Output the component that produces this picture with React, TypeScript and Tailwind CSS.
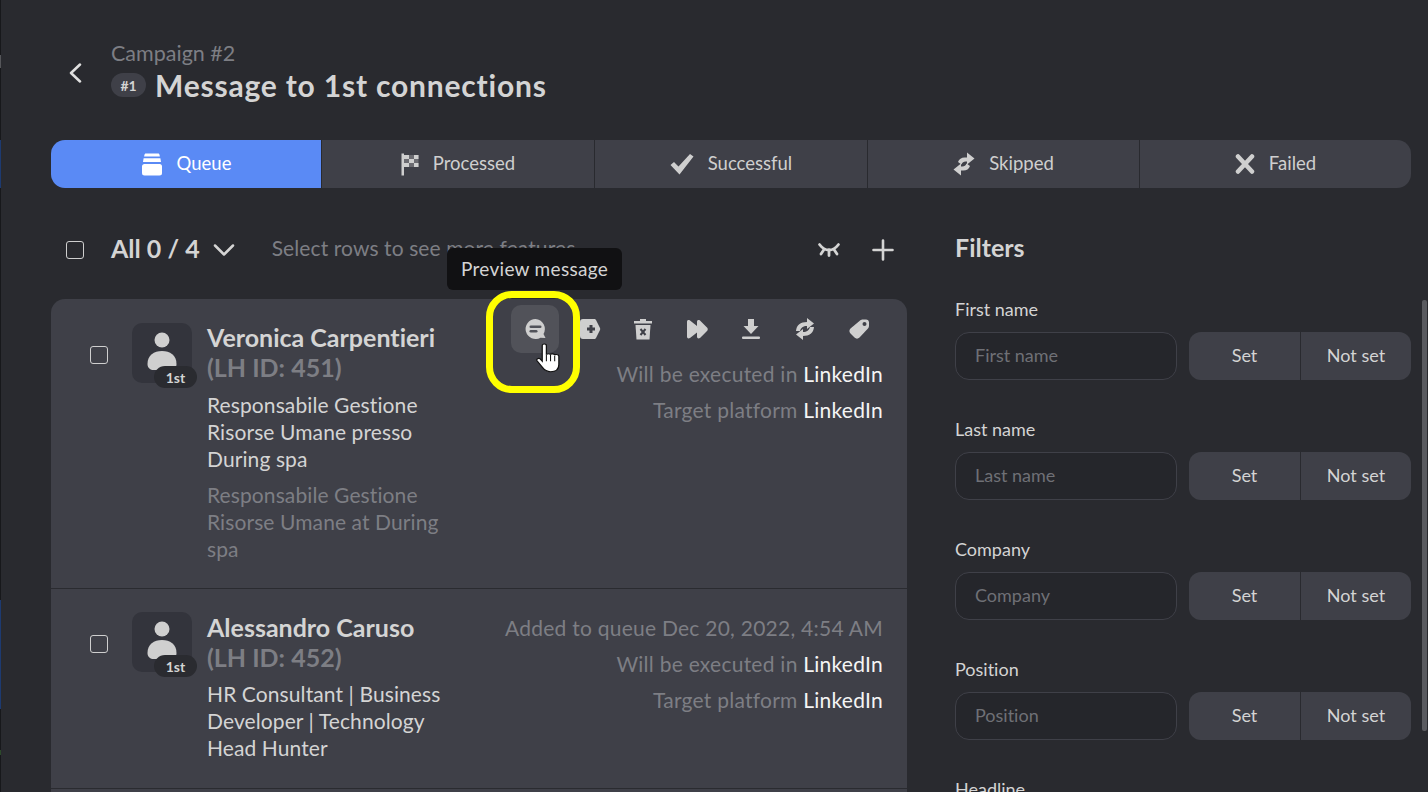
import React from "react";

const font = "font-['Lato','Liberation_Sans',sans-serif] [font-variant-ligatures:none]";

function QueueIcon() {
  return (
    <svg width="22" height="23" viewBox="0 0 22 23" fill="#fff">
      <path d="M3.500 1.800c.2-.8.6-1.300 1.400-1.300h12.200c.8 0 1.200.5 1.400 1.300l.4 1.700H3.100z" />
      <path d="M2.600 5.300h16.800l.6 3.700H2z" />
      <rect x="1" y="11" width="20" height="11.500" rx="2.500" />
    </svg>
  );
}
function FlagIcon() {
  return (
    <svg width="18" height="23" viewBox="0 0 18 23" fill="#cfcfcf">
      <rect x="0.500" y="0.500" width="2.500" height="22" />
      <path d="M3 2h14.500v12H3z" fillOpacity="0.3" />
      <path d="M3 2h5v4H3zM13 2h4.500v4H13zM8 6h5v4H8zM3 10h5v4H3zM13 10h4.500v4H13z" />
    </svg>
  );
}
function CheckIcon() {
  return (
    <svg width="24" height="22" viewBox="0 0 24 22" fill="#cfcfcf">
      <path d="M0.500 12l3.500-3 4.500 4.500L20 1l3.500 2.500L9.500 21.500z" />
    </svg>
  );
}
function SkipIcon() {
  return (
    <svg width="22" height="24" viewBox="0 0 22 24" fill="#cfcfcf">
      <path d="M14 0.500l7.500 6-7.500 6V9.500h-1.500c-2 0-3 .8-4 3L5 10c1-3 3.500-4.500 6.500-4.500H14z" />
      <path d="M8 23.500l-7.500-6 7.500-6v3h1.500c2 0 3-.8 4-3L17 14c-1 3-3.500 4.500-6.500 4.500H8z" />
    </svg>
  );
}
function XIcon() {
  return (
    <svg width="20" height="20" viewBox="0 0 20 20" stroke="#cfcfcf" strokeWidth="4.500" strokeLinecap="round" fill="none">
      <path d="M3 2.500l14 15M17 2.500l-14 15" />
    </svg>
  );
}
function Lashes() {
  return (
    <svg width="24" height="16" viewBox="0 0 24 16" stroke="#d4d4d4" strokeWidth="2.800" strokeLinecap="round" fill="none">
      <path d="M2.500 2.500C5.500 6.500 8 8 12 8s6.500-1.500 9.500-5.500" />
      <path d="M12 8v5.500M7 7.500l-3 4.500M17 7.500l3 4.500" />
    </svg>
  );
}
function Plus() {
  return (
    <svg width="22" height="22" viewBox="0 0 22 22" stroke="#d4d4d4" strokeWidth="2.600" strokeLinecap="round">
      <path d="M11 1.500v19M1.500 11h19" />
    </svg>
  );
}
function Person() {
  return (
    <svg width="30" height="44" viewBox="0 0 30 44" fill="#cfcfcf">
      <circle cx="15" cy="8" r="7.500" />
      <path d="M0.500 32c0-9 6.500-13 14.500-13s14.500 4 14.500 13c0 4-3 6-6 6h-17c-3 0-6-2-6-6z" />
    </svg>
  );
}
function Badge() {
  return (
    <div className="absolute left-[22px] top-[43px] flex h-[22px] w-[43px] items-center justify-center rounded-[11px] bg-[#2a2b30] text-[14px] font-bold text-[#d4d4d4]">
      1st
    </div>
  );
}
function Avatar() {
  return (
    <div className="relative flex h-[60px] w-[60px] shrink-0 justify-center rounded-[10px] bg-[#33343c] pt-[9px]">
      <Person />
      <Badge />
    </div>
  );
}
function Box() {
  return <div className="h-[18px] w-[18px] shrink-0 rounded-[3px] border border-[#cfcfcf]" />;
}
function Platform({ label }: { label: string }) {
  return (
    <div className="text-[21px] leading-[36px] tracking-[0.25px] text-[#7d7e84]">
      {label} <span className="text-[#f5f5f5]">LinkedIn</span>
    </div>
  );
}

const rowIcons = [
  <svg key="a" width="24" height="22" viewBox="0 0 24 22" fill="#cfcfcf"><path d="M3 4c0-2 1-3 3-3h11c1 0 1.600.4 2 1l4 8c.3.6.3 1.400 0 2l-4 8c-.4.6-1 1-2 1H6c-2 0-3-1-3-3z" /><path d="M10 11h8M14 7v8" stroke="#3f4048" strokeWidth="3" /></svg>,
  <svg key="b" width="20" height="22" viewBox="0 0 20 22" fill="#cfcfcf"><path d="M7 1h6v2h6v2.500H1V3h6z" /><path d="M2.500 7h15l-1 14.500H3.500z" /><path d="M7.500 11l5 6M12.500 11l-5 6" stroke="#3f4048" strokeWidth="2" /></svg>,
  <svg key="c" width="22" height="22" viewBox="0 0 22 22" fill="#cfcfcf"><path d="M1 4c0-2 1.500-2.500 3-1.500L11 8V4c0-2 1.500-2.500 3-1.500l7 7c1 1 1 2.500 0 3.500l-7 7c-1.500 1-3 .5-3-1.500v-4l-7 5.500C2.500 21 1 20.500 1 18.500z" /></svg>,
  <svg key="d" width="20" height="22" viewBox="0 0 20 22" fill="#cfcfcf"><path d="M7 1h6v7h4.500L10 16 2.500 8H7z" /><rect x="1" y="18.500" width="18" height="2.500" rx="1" /></svg>,
  <svg key="e" width="20" height="24" viewBox="0 0 20 24" fill="#cfcfcf"><path d="M12 1l7 5.500-7 5.500V9c-4 0-6 1.500-7 5H1c.500-6 4.500-9 11-9z" /><path d="M8 23l-7-5.500L8 12v3c4 0 6-1.500 7-5h4c-.500 6-4.500 9-11 9z" /></svg>,
  <svg key="f" width="24" height="24" viewBox="0 0 24 24" fill="#cfcfcf"><path d="M12.500 4c1-1 2-1.500 3.500-1.500h3c1.700 0 3 1.300 3 3v3c0 1.500-.5 2.500-1.500 3.500L12.500 20.500c-1.500 1.500-3.500 1.500-5 0l-4-4c-1.500-1.500-1.500-3.500 0-5z" /><circle cx="17.500" cy="7" r="2" fill="#3f4048" /></svg>,
];

function Filter({ label }: { label: string }) {
  return (
    <div className="flex flex-col">
      <div className="h-[24px] text-[18px] leading-[18px] text-[#d4d4d4]">{label}</div>
      <div className="mt-[8px] flex h-[48px] gap-[12px]">
        <input
          readOnly
          placeholder={label}
          className="h-[48px] w-[222px] rounded-[14px] border border-[#3f4048] bg-[#25262b] px-[19px] pb-[2px] text-[18px] text-[#d4d4d4] outline-none placeholder:text-[#6f7076]"
        />
        <div className="flex w-[222px] overflow-hidden rounded-[12px] text-[18px] text-[#d4d4d4]">
          <div className="flex w-[111px] items-center justify-center bg-[#3f4048] pb-[2px]">Set</div>
          <div className="ml-[1px] flex flex-1 items-center justify-center bg-[#3f4048] pb-[2px]">Not set</div>
        </div>
      </div>
    </div>
  );
}

const tabs = [
  { label: "Queue", icon: <QueueIcon />, w: "w-[270px]" },
  { label: "Processed", icon: <FlagIcon />, w: "w-[272px]" },
  { label: "Successful", icon: <CheckIcon />, w: "w-[272px]" },
  { label: "Skipped", icon: <SkipIcon />, w: "w-[271px]" },
  { label: "Failed", icon: <XIcon />, w: "flex-1" },
];

export default function App() {
  return (
    <div className={`${font} relative h-[792px] w-[1428px] overflow-hidden bg-[#292a2f] pl-[51px] pr-[17px] text-[#d4d4d4]`}>
      <div className="absolute left-0 top-0 h-full w-[1px] bg-[#17181b]">
        <div className="absolute top-[55px] h-[13px] w-full bg-[#55565a]" />
        <div className="absolute top-[140px] h-[48px] w-full bg-[#1d3a70]" />
        <div className="absolute top-[600px] h-[109px] w-full bg-[#1d3a70]" />
        <div className="absolute top-[750px] h-[5px] w-full bg-[#2c4a2a]" />
      </div>
      <header className="flex h-[140px] items-start">
        <div className="ml-[15px] mt-[63px] w-[45px]">
          <svg width="20" height="20" viewBox="0 0 20 20" fill="none" stroke="#e0e0e0" strokeWidth="2.500" strokeLinecap="round" strokeLinejoin="round">
            <path d="M14 1.500L5 10l9 8.500" />
          </svg>
        </div>
        <div className="pt-[40px]">
          <div className="text-[21.500px] leading-[26px] text-[#7d7e84]">Campaign #2</div>
          <div className="flex items-center gap-[9px]">
            <span className="flex h-[24px] w-[35px] items-center justify-center rounded-[12px] bg-[#3f4048] text-[14px] font-bold text-[#d4d4d4]">#1</span>
            <span className="text-[30px] font-bold leading-[38px] tracking-[0.8px] text-[#d4d4d4]">Message to 1st connections</span>
          </div>
        </div>
      </header>

      <nav className="flex h-[48px] gap-[1px] overflow-hidden rounded-[14px] text-[18.500px]">
        {tabs.map((t, i) => (
          <div key={t.label} className={`${t.w} flex items-center justify-center gap-[14px] ${i === 0 ? "bg-[#5a8af5] text-white" : "bg-[#3f4048] text-[#cfcfcf]"}`}>
            {t.icon}
            <span className="pb-[1px]">{t.label}</span>
          </div>
        ))}
      </nav>

      <div className="mt-[38px] flex gap-[48px]">
        <main className="w-[856px] shrink-0">
          <div className="flex h-[48px] items-center pl-[15px] pr-[13px]">
            <Box />
            <div className="ml-[27px] pb-[2px] text-[25px] font-bold text-[#d4d4d4]">All 0 / 4</div>
            <svg className="ml-[13px]" width="22" height="14" viewBox="0 0 22 14" fill="none" stroke="#d4d4d4" strokeWidth="2.500" strokeLinecap="round" strokeLinejoin="round">
              <path d="M2 2.500l9 9 9-9" />
            </svg>
            <div className="ml-[37px] pb-[4px] text-[21px] tracking-[0.1px] text-[#7d7e84]">Select rows to see more features</div>
            <div className="ml-auto flex items-center gap-[31px]">
              <Lashes />
              <Plus />
            </div>
          </div>

          <section className="relative mt-[25px] overflow-hidden rounded-t-[14px] bg-[#3f4048]">
            <article className="flex h-[290px] border-b border-[#2a2b30] pl-[39px] pr-[24px] pt-[24px]">
              <div className="mt-[23px]"><Box /></div>
              <div className="ml-[24px]"><Avatar /></div>
              <div className="ml-[15px] -mt-[1px] w-[245px]">
                <div className="text-[25px] font-bold leading-[30px] text-[#d4d4d4]">Veronica Carpentieri</div>
                <div className="text-[25px] font-bold leading-[30px] text-[#7d7e84]">(LH ID: 451)</div>
                <div className="mt-[9px] text-[21px] leading-[27px] tracking-[0.1px] text-[#d4d4d4]">Responsabile Gestione<br />Risorse Umane presso<br />During spa</div>
                <div className="mt-[9px] text-[21px] leading-[27px] tracking-[0.1px] text-[#7d7e84]">Responsabile Gestione<br />Risorse Umane at During<br />spa</div>
              </div>
              <div className="flex-1 text-right">
                <div className="-mt-[18px] flex items-center justify-end gap-[6px]">
                  <div className="flex h-[48px] w-[48px] items-center justify-center rounded-[10px] bg-[#515259]">
                    <svg width="24" height="24" viewBox="0 0 24 24" fill="#cfcfcf">
                      <path d="M12.500 2a10 10 0 1 0 5 18.700l5 .300-2-4A10 10 0 0 0 12.500 2z" />
                      <rect x="6.500" y="8.500" width="12" height="2.600" rx="1.300" fill="#515259" />
                      <rect x="6.500" y="13" width="8" height="2.600" rx="1.300" fill="#515259" />
                    </svg>
                  </div>
                  {rowIcons.map((ic, i) => (
                    <div key={i} className="flex h-[48px] w-[48px] items-center justify-center">{ic}</div>
                  ))}
                </div>
                <div className="mt-[3px]">
                  <Platform label="Will be executed in" />
                  <Platform label="Target platform" />
                </div>
              </div>
            </article>
            <article className="flex h-[200px] border-b border-[#2a2b30] pl-[39px] pr-[24px] pt-[23px]">
              <div className="mt-[23px]"><Box /></div>
              <div className="ml-[24px]"><Avatar /></div>
              <div className="ml-[15px] w-[245px]">
                <div className="text-[25px] font-bold leading-[30px] text-[#d4d4d4]">Alessandro Caruso</div>
                <div className="text-[25px] font-bold leading-[30px] text-[#7d7e84]">(LH ID: 452)</div>
                <div className="mt-[8px] text-[21px] leading-[27px] tracking-[0.1px] text-[#d4d4d4]">HR Consultant | Business<br />Developer | Technology<br />Head Hunter</div>
              </div>
              <div className="-mt-[2px] flex-1 text-right">
                <div className="whitespace-nowrap text-[21px] leading-[36px] tracking-[0.25px] text-[#7d7e84]">Added to queue Dec 20, 2022, 4:54 AM</div>
                <Platform label="Will be executed in" />
                <Platform label="Target platform" />
              </div>
            </article>
            <div className="h-[60px]" />
          </section>
        </main>

        <aside className="relative w-[456px] shrink-0">
          <div className="flex h-[48px] items-center pb-[4px] text-[25px] font-bold text-[#d4d4d4]">Filters</div>
          <div className="mt-[25px] flex flex-col gap-[40px] pt-[1px]">
            <Filter label="First name" />
            <Filter label="Last name" />
            <Filter label="Company" />
            <Filter label="Position" />
            <Filter label="Headline" />
          </div>
        </aside>
      </div>

      <div className="absolute right-[1px] top-[300px] h-[431px] w-[5px] rounded-[2px] bg-[#5a5b60]" />

      <div className="absolute left-[447px] top-[248px] flex h-[42px] w-[175px] items-center justify-center rounded-[6px] bg-[#111113] pt-[1px] text-[19px] tracking-[0.3px] text-[#d4d4d4]">
        Preview message
      </div>
      <div className="absolute left-[486px] top-[291px] h-[102px] w-[94px] rounded-[26px] border-[7px] border-[#ffff00]" />
      <svg className="absolute left-[536px] top-[343px]" width="27" height="31" viewBox="0 0 26 34" preserveAspectRatio="none">
        <path d="M6 3c0-2.500 4-2.500 4 0v10c0-1.500 4-1.500 4 0 0-1.500 4-1.500 4 .5 0-1.500 4-1 4 1v9c0 5-3 8-8 8-4 0-6-2-8-5l-5-7c-1-2 1.500-3.500 3-2l2 2.500z" fill="#fff" stroke="#111" strokeWidth="1.200" />
        <path d="M10 13v7M14 13v7M18 14v6" stroke="#111" strokeWidth="1" />
      </svg>
    </div>
  );
}
